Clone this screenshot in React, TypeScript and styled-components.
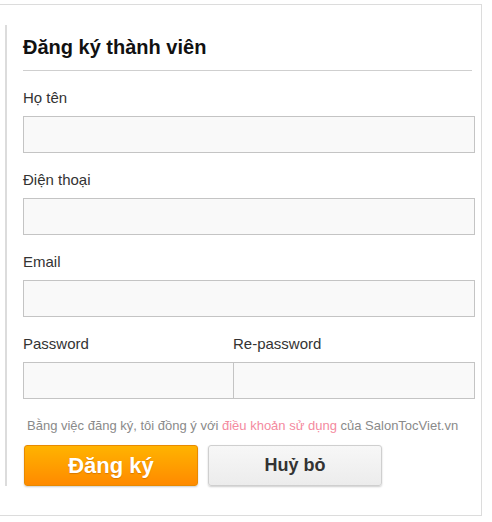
import styled, { createGlobalStyle } from "styled-components";

const GlobalStyle = createGlobalStyle`
    body {
        margin: 0;
        background: #fff;
        font-family: Arial, "Liberation Sans", sans-serif;
    }
`

const Frame = styled.div`
    margin: 4px 0 0 -1px;
    width: 483px;
    height: 512px;
    box-sizing: border-box;
    border: 1px solid #dcdcdc;
    padding: 20px 0 0 5px;
`

const Panel = styled.div`
    border-left: 2px solid #dcdcdc;
    padding: 10px 6px 0 16px;
    display: flex;
    flex-direction: column;
`

const Title = styled.h2`
    margin: 0 3px 0 0;
    padding-bottom: 11px;
    border-bottom: 1px solid #cfcfcf;
    font-size: 20px;
    line-height: 24px;
    font-weight: 700;
    color: #111;
`

const Fields = styled.div`
    display: flex;
    flex-direction: column;
    gap: 18px;
    margin-top: 18px;
`

const Row = styled.div<{ $split?: boolean }>`
    display: grid;
    grid-template-columns: ${p => p.$split ? '210px 1fr' : '1fr'};

    /* the two password boxes share one border */
    & > label:first-child:not(:last-child) input {
        margin-right: -1px;
    }
`

const Field = styled.label`
    display: flex;
    flex-direction: column;
    gap: 9px;
`

const Label = styled.span`
    font-size: 15px;
    line-height: 18px;
    color: #333;
`

const Input = styled.input`
    height: 37px;
    box-sizing: border-box;
    border: 1px solid #c4c4c4;
    background: #f9f9f9;
    margin: 0;
    padding: 0 8px;
    font: inherit;
    outline: none;
    position: relative;
`

const Terms = styled.p`
    margin: 19px 0 0 4px;
    font-size: 13px;
    line-height: 16px;
    color: #8a8a8a;

    a {
        color: #f48aa0;
        text-decoration: none;
    }
`

const Buttons = styled.div`
    display: flex;
    gap: 10px;
    margin: 11px 0 0 1px;
`

const Button = styled.button<{ $primary?: boolean }>`
    width: 174px;
    height: 41px;
    box-sizing: border-box;
    border-radius: 3px;
    font-family: Arial, "Liberation Sans", sans-serif;
    font-weight: 700;
    cursor: pointer;
    font-size: ${p => p.$primary ? '22px' : '18px'};
    color: ${p => p.$primary ? '#fff' : '#333'};
    border: 1px solid ${p => p.$primary ? '#e88a00' : '#cfcfcf'};
    background: ${p => p.$primary
        ? 'linear-gradient(#ffb300, #ff8a00)'
        : 'linear-gradient(#f7f7f7, #ececec)'};
    box-shadow: 0 1px 2px rgba(0, 0, 0, 0.2);
    text-shadow: ${p => p.$primary ? '0 1px 1px rgba(160, 80, 0, 0.4)' : 'none'};
`

export default function App() {
    return (
        <>
            <GlobalStyle />
            <Frame>
                <Panel>
                    <Title>Đăng ký thành viên</Title>
                    <Fields>
                        <Row>
                            <Field><Label>Họ tên</Label><Input type="text" /></Field>
                        </Row>
                        <Row>
                            <Field><Label>Điện thoại</Label><Input type="text" /></Field>
                        </Row>
                        <Row>
                            <Field><Label>Email</Label><Input type="text" /></Field>
                        </Row>
                        <Row $split>
                            <Field><Label>Password</Label><Input type="password" /></Field>
                            <Field><Label>Re-password</Label><Input type="password" /></Field>
                        </Row>
                    </Fields>
                    <Terms>
                        Bằng việc đăng ký, tôi đồng ý với <a href="#">điều khoản sử dụng</a> của SalonTocViet.vn
                    </Terms>
                    <Buttons>
                        <Button $primary>Đăng ký</Button>
                        <Button>Huỷ bỏ</Button>
                    </Buttons>
                </Panel>
            </Frame>
        </>
    )
}
